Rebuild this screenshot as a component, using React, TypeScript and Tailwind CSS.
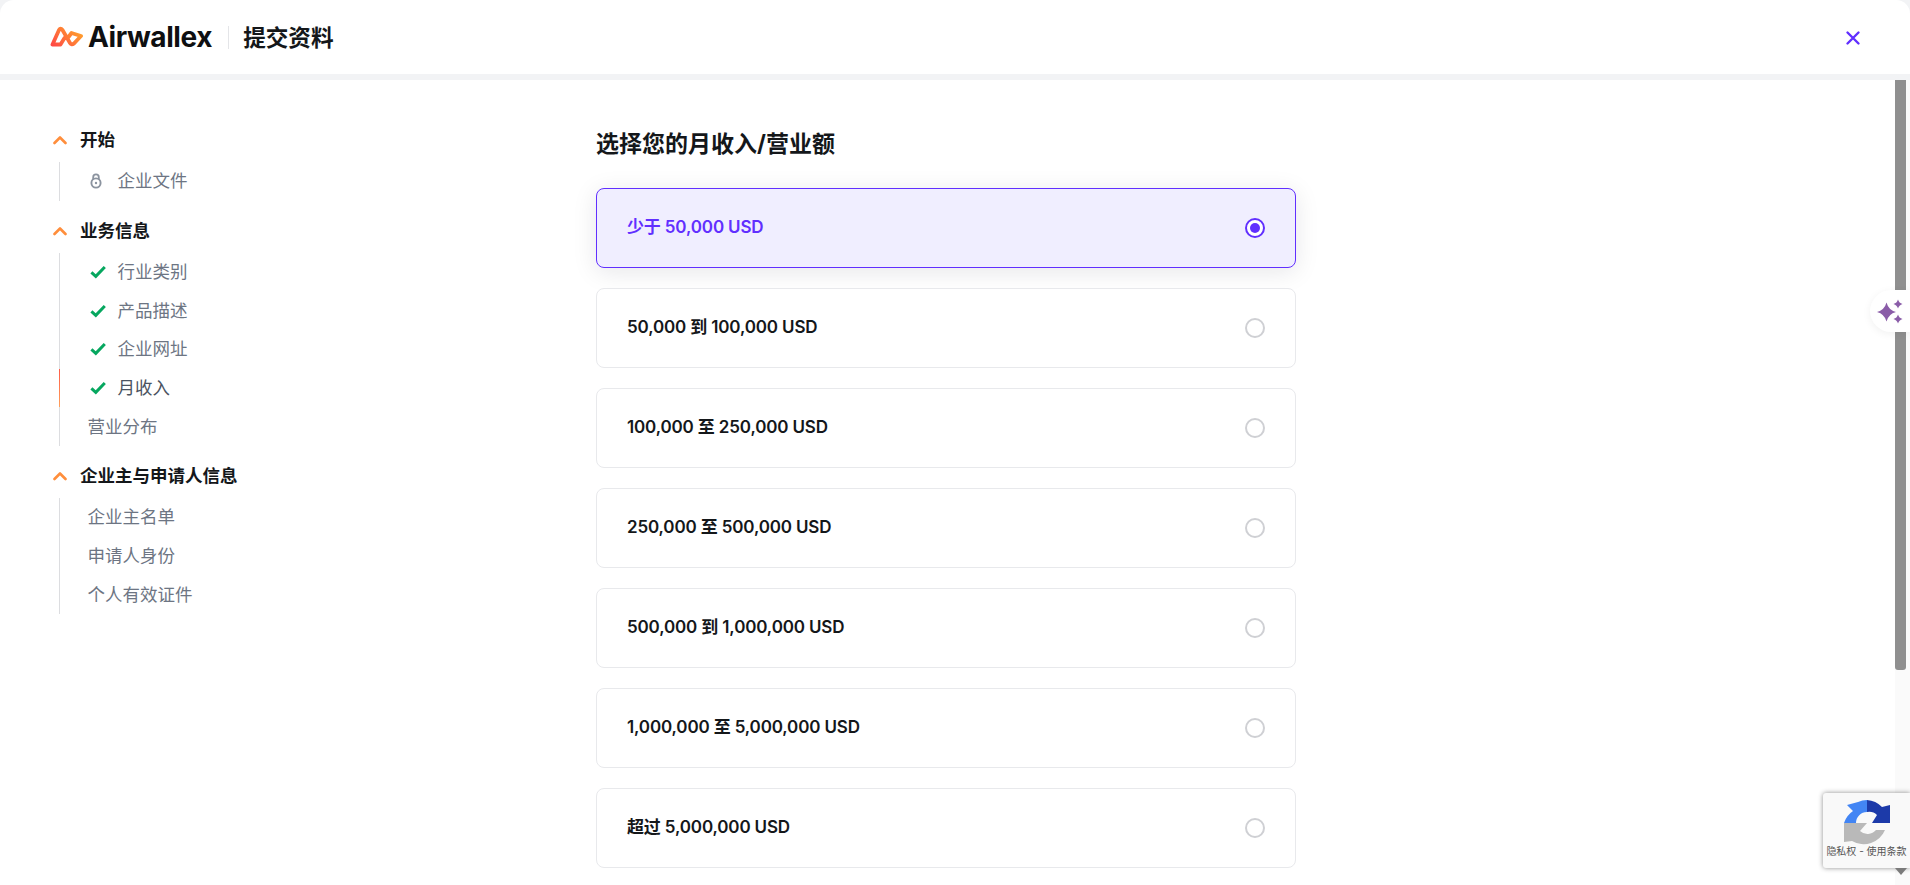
import React from "react";

function Chevron() {
  return (
    <svg width="14" height="10" viewBox="0 0 14 10" className="shrink-0">
      <path d="M1.5 8 L7 2.5 L12.5 8" fill="none" stroke="#ff8e3c" strokeWidth="2.6" strokeLinecap="round" strokeLinejoin="round" />
    </svg>
  );
}
function Check() {
  return (
    <svg width="16" height="14" viewBox="0 0 16 14" className="shrink-0">
      <path d="M1.4 7.4 L5.8 11.4 L14.8 2" fill="none" stroke="#06a75f" strokeWidth="3" strokeLinejoin="miter" />
    </svg>
  );
}
function Lock() {
  return (
    <svg width="14" height="16" viewBox="0 0 14 16" className="shrink-0">
      <path d="M4.2 6 V4.2 a2.8 2.8 0 0 1 5.6 0 V6" fill="none" stroke="#8b939f" strokeWidth="1.8" />
      <circle cx="7" cy="10" r="4.6" fill="none" stroke="#8b939f" strokeWidth="1.9" />
      <circle cx="7" cy="10" r="1.2" fill="#8b939f" />
    </svg>
  );
}

function Row({ icon, label, active, dark }: { icon?: "check" | "lock"; label: string; active?: boolean; dark?: boolean }) {
  return (
    <div
      className={`flex h-[38.7px] items-center border-l-[1.5px] ${
        active ? "[border-image:linear-gradient(#ff5a47,#ffa25c)_1]" : "border-[#dcdde0]"
      } ${icon === "check" ? "pl-[30px]" : icon === "lock" ? "pl-[29px]" : "pl-[28px]"}`}
    >
      {icon === "check" && <Check />}
      {icon === "lock" && <Lock />}
      <span className={`text-[17.5px] ${icon === "lock" ? "ml-[15px]" : icon ? "ml-[12px]" : ""} ${dark ? "text-[#4a5361]" : "text-[#6d7583]"}`}>{label}</span>
    </div>
  );
}

function Section({ title, children }: { title: string; children: React.ReactNode }) {
  return (
    <div className="mt-[8px] first:mt-0">
      <div className="flex h-[44px] items-center pl-[53px]">
        <Chevron />
        <span className="ml-[13px] text-[17.5px] font-bold text-[#14171a]">{title}</span>
      </div>
      <div className="ml-[58.5px]">{children}</div>
    </div>
  );
}

function Option({ label, selected }: { label: string; selected?: boolean }) {
  return (
    <div
      className={`flex h-[80px] items-center justify-between rounded-lg border pl-[30px] pr-[30px] ${
        selected ? "border-[#612fff] bg-[#f0eeff] shadow-[0_4px_24px_rgba(20,20,40,0.10)]" : "border-[#e8e9ec] bg-white"
      }`}
    >
      <span className={`text-[17px] font-semibold tracking-[-0.15px] ${selected ? "text-[#612fff]" : "text-[#14171a]"}`}>{label}</span>
      {selected ? (
        <span className="flex h-5 w-5 items-center justify-center rounded-full border-2 border-[#612fff] bg-white">
          <span className="h-[10px] w-[10px] rounded-full bg-[#612fff]" />
        </span>
      ) : (
        <span className="h-5 w-5 rounded-full border-2 border-[#cfd0d4] bg-white" />
      )}
    </div>
  );
}

export default function App() {
  return (
    <div
      className="relative flex h-[885px] w-[1910px] flex-col overflow-hidden bg-[#f2f3f5]"
      style={{ fontFamily: 'Inter, "Noto Sans CJK SC", sans-serif' }}
    >
      <header className="flex h-[74px] shrink-0 items-center justify-between rounded-t-[14px] bg-white pl-[50px] pr-[49px]">
        <div className="flex items-center">
          <svg width="34" height="22" viewBox="0 0 34 22" className="shrink-0">
            <defs>
              <linearGradient id="lg" x1="0" y1="1" x2="1" y2="0.4">
                <stop offset="0" stopColor="#ff4a45" />
                <stop offset="1" stopColor="#ff9a2e" />
              </linearGradient>
            </defs>
            <path
              d="M2.5 18.5 L9 4 Q10.5 1.5 12.5 4 L20 17 Q21.5 19.5 24 17.5 L31 10 L21.5 7 L18.5 11 M2.5 18.5 L10.5 18.5 L14.5 12"
              fill="none"
              stroke="url(#lg)"
              strokeWidth="3.8"
              strokeLinejoin="round"
              strokeLinecap="round"
            />
          </svg>
          <span className="ml-[4px] text-[28px] font-bold tracking-[-0.4px] text-[#0e0f11]">Airwallex</span>
          <span className="ml-[16px] h-[23px] w-px bg-[#e4e5e8]" />
          <span className="ml-[14px] mt-[2px] text-[22.6px] font-bold text-[#14171a]">提交资料</span>
        </div>
        <svg width="16" height="16" viewBox="0 0 16 16" className="mt-[2px]">
          <path d="M2.5 2.5 L13.5 13.5 M13.5 2.5 L2.5 13.5" stroke="#612fff" strokeWidth="2.4" strokeLinecap="round" />
        </svg>
      </header>
      <div className="mt-[6px] flex min-h-0 flex-1 bg-white">
        <aside className="w-[596px] shrink-0 pt-[38px]">
          <Section title="开始">
            <Row icon="lock" label="企业文件" />
          </Section>
          <Section title="业务信息">
            <Row icon="check" label="行业类别" />
            <Row icon="check" label="产品描述" />
            <Row icon="check" label="企业网址" />
            <Row icon="check" label="月收入" active dark />
            <Row label="营业分布" />
          </Section>
          <Section title="企业主与申请人信息">
            <Row label="企业主名单" />
            <Row label="申请人身份" />
            <Row label="个人有效证件" />
          </Section>
        </aside>
        <main className="w-[700px] shrink-0 pt-[46px]">
          <h1 className="mb-[22px] h-[40px] text-[23px] font-bold leading-[36px] text-[#14171a]">选择您的月收入/营业额</h1>
          <div className="flex flex-col gap-[20px]">
            <Option label="少于 50,000 USD" selected />
            <Option label="50,000 到 100,000 USD" />
            <Option label="100,000 至 250,000 USD" />
            <Option label="250,000 至 500,000 USD" />
            <Option label="500,000 到 1,000,000 USD" />
            <Option label="1,000,000 至 5,000,000 USD" />
            <Option label="超过 5,000,000 USD" />
          </div>
        </main>
        <div className="flex flex-1 justify-end">
          <div className="w-[15px] bg-[#fafafa]">
            <div className="h-[590px] w-[11px] rounded-b-[3px] bg-[#8f8f8f]" />
          </div>
        </div>
      </div>

      {/* floating assistant tab */}
      <div className="absolute right-0 top-[290px] flex h-[42px] w-[40px] items-center justify-center rounded-l-[21px] bg-white shadow-[0_2px_8px_rgba(0,0,0,0.06)]">
        <svg width="28" height="28" viewBox="0 0 28 28">
          <path d="M10.5 5.5 Q12.5 13 20 15 Q12.5 17 10.5 24.5 Q8.5 17 1 15 Q8.5 13 10.5 5.5Z" fill="#8a5ca8" />
          <path d="M22 2.5 Q23 6 26.5 7 Q23 8 22 11.5 Q21 8 17.5 7 Q21 6 22 2.5Z" fill="#8a5ca8" />
          <path d="M22 17.5 Q23 21 26.5 22 Q23 23 22 26.5 Q21 23 17.5 22 Q21 21 22 17.5Z" fill="#8a5ca8" />
        </svg>
      </div>

      {/* reCAPTCHA badge */}
      <div className="absolute left-[1823px] top-[793px] flex h-[75px] w-[87px] flex-col items-center rounded-l-[3px] bg-[#f9f9f9] pt-[7px] shadow-[0_0_5px_rgba(0,0,0,0.45)]">
        <svg width="46" height="47" viewBox="0 0 46 47" className="shrink-0">
          <path d="M23 0 A23 23 0 0 1 38 7 L46 5 V23 H28 L33 15 A11 11 0 0 0 23 12 Z" fill="#1c3aa9" />
          <path d="M23 0 A23 23 0 0 0 14 2 L3 5 L9 11 A23 23 0 0 0 0 23 H12 A11 11 0 0 1 23 12 Z" fill="#4285f4" />
          <path d="M0 23 H23 L16 31 A11 11 0 0 0 32 30 H41 A23 23 0 0 1 8 41 L0 42 Z" fill="#b9b9b9" />
        </svg>
        <span className="mt-[-3px] whitespace-nowrap text-[10px] leading-[14px] text-[#555]">隐私权 - 使用条款</span>
      </div>
      <div className="absolute left-[1895px] top-[868px] h-0 w-0 border-x-[6px] border-t-[7px] border-x-transparent border-t-[#7b7b7b]" />
    </div>
  );
}
